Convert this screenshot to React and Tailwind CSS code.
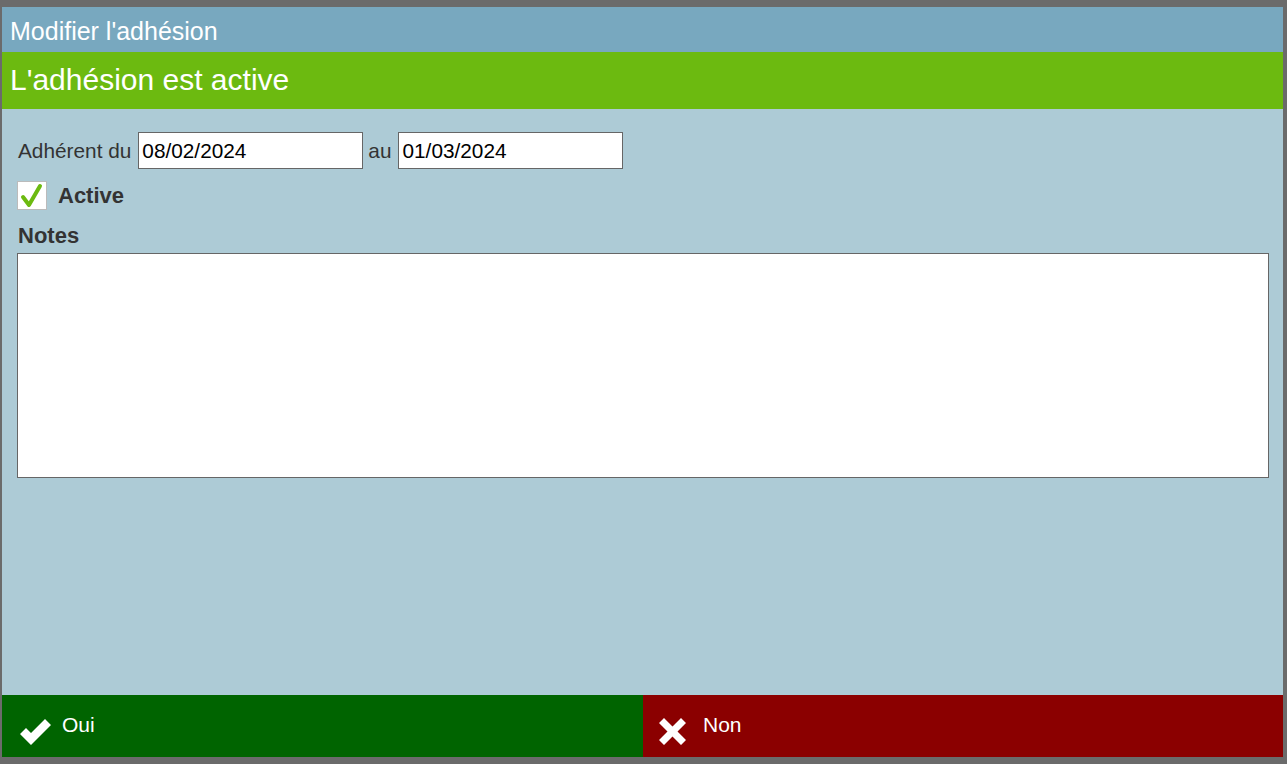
import React from "react";

export default function App() {
  return (
    <div
      className="w-[1287px] h-[764px] bg-[#6b6b6b] pt-[7px] pl-[2px] overflow-hidden"
      style={{ fontFamily: '"Liberation Sans", Arial, sans-serif' }}
    >
      <div className="w-[1281px] h-[750px] flex flex-col bg-[#adcbd6]">
        <div className="h-[45px] bg-[#78a8bf] text-white text-[25px] leading-[45px] pl-[8px] pt-[2px]">
          Modifier l'adhésion
        </div>
        <div className="h-[57px] bg-[#6cba10] text-white text-[30px] leading-[55px] pl-[8px]">
          L'adhésion est active
        </div>
        <div className="flex-1 flex flex-col pl-[15px] pr-[13px] pt-[23px]">
          <div className="flex items-center h-[37px] text-[20.8px] text-[#333]">
            <span className="pl-[1px]">Adhérent du</span>
            <input
              readOnly
              value="08/02/2024"
              className="ml-[7px] w-[225px] h-[37px] bg-white border border-[#666] px-[3px] text-[20.8px] text-black outline-none"
            />
            <span className="ml-[5px]">au</span>
            <input
              readOnly
              value="01/03/2024"
              className="ml-[7px] w-[225px] h-[37px] bg-white border border-[#666] px-[3px] text-[20.8px] text-black outline-none"
            />
          </div>
          <div className="flex items-center mt-[12px] h-[29px]">
            <div className="w-[30px] h-[29px] bg-white border border-[#bbb] flex items-center justify-center">
              <svg width="28" height="27" viewBox="0 0 28 27">
                <path
                  d="M5 15 L11 23 L22 4"
                  fill="none"
                  stroke="#6cba10"
                  strokeWidth="4"
                  strokeLinecap="round"
                  strokeLinejoin="round"
                />
              </svg>
            </div>
            <span className="ml-[11px] text-[22px] font-bold text-[#333]">Active</span>
          </div>
          <div className="mt-[13px] h-[25px] leading-[25px] text-[22px] font-bold text-[#333] pl-[1px]">
            Notes
          </div>
          <textarea
            readOnly
            className="mt-[5px] w-[1252px] h-[225px] bg-white border border-[#666] resize-none outline-none"
          />
        </div>
        <div className="h-[62px] flex text-white text-[21px]">
          <div className="w-[641px] bg-[#006400] flex items-center">
            <svg className="ml-[16px] mt-[12px]" width="34" height="28" viewBox="0 0 34 28">
              <path d="M2 16 L8 10 L13 15 L27 1 L33 7 L13 27 Z" fill="white" />
            </svg>
            <span className="ml-[10px] mb-[2px]">Oui</span>
          </div>
          <div className="flex-1 bg-[#8b0000] flex items-center">
            <svg className="ml-[16px] mt-[10px]" width="27" height="27" viewBox="0 0 27 27">
              <path
                d="M5 0 L13.5 8.5 L22 0 L27 5 L18.5 13.5 L27 22 L22 27 L13.5 18.5 L5 27 L0 22 L8.5 13.5 L0 5 Z"
                fill="white"
              />
            </svg>
            <span className="ml-[17px] mb-[2px]">Non</span>
          </div>
        </div>
      </div>
    </div>
  );
}
